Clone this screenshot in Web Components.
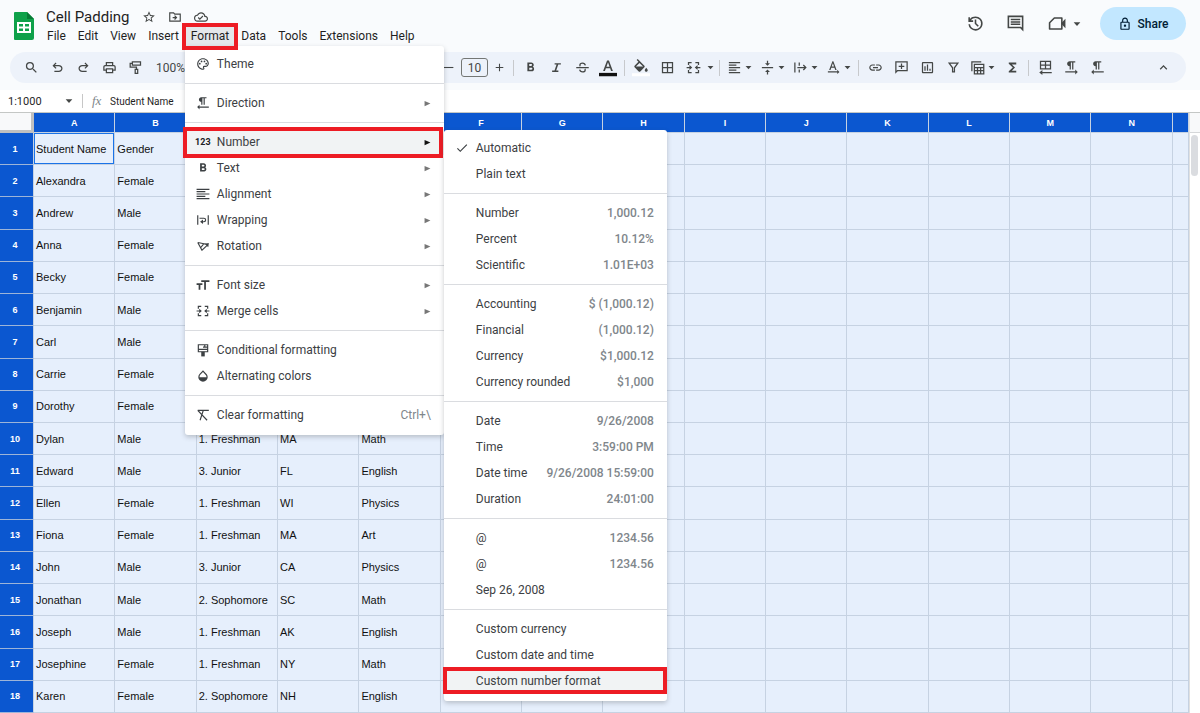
<!DOCTYPE html>
<html lang="en">
<head>
<meta charset="utf-8">
<title>Cell Padding</title>
<style>
html,body{margin:0;height:100%}
body{font-family:Roboto,"Noto Sans",sans-serif;font-size:12px;color:#1f1f1f;background:#fff;overflow:hidden}
</style>
</head>
<body>
<sheets-app>
  <doc-header slot="header"></doc-header>
  <tool-bar slot="header"></tool-bar>
  <formula-bar slot="formula"></formula-bar>
  <sheet-grid slot="grid"></sheet-grid>
</sheets-app>

<script>
const S = 'fill="none" stroke="currentColor" stroke-width="2"';
const p = d => `<path d="${d}"/>`;
const ICONS = {
  search: p('M15.5 14h-.79l-.28-.27A6.471 6.471 0 0 0 16 9.5 6.5 6.5 0 1 0 9.5 16c1.61 0 3.09-.59 4.23-1.57l.27.28v.79l5 4.99L20.49 19l-4.99-5zm-6 0C7.01 14 5 11.99 5 9.5S7.01 5 9.5 5 14 7.01 14 9.5 11.99 14 9.5 14z'),
  undo: p('M7 19v-2h7.1q1.575 0 2.738-1T18 13.5t-1.163-2.5T14.1 10H7.8l2.6 2.6L9 14 4 9l5-5 1.4 1.4L7.8 8h6.3q2.425 0 4.163 1.575T20 13.5t-1.738 3.925T14.1 19z'),
  redo: '<g transform="matrix(-1 0 0 1 24 0)">' + p('M7 19v-2h7.1q1.575 0 2.738-1T18 13.5t-1.163-2.5T14.1 10H7.8l2.6 2.6L9 14 4 9l5-5 1.4 1.4L7.8 8h6.3q2.425 0 4.163 1.575T20 13.5t-1.738 3.925T14.1 19z') + '</g>',
  print: p('M19 8h-1V3H6v5H5c-1.66 0-3 1.34-3 3v6h4v4h12v-4h4v-6c0-1.66-1.34-3-3-3zM8 5h8v3H8V5zm8 14H8v-4h8v4zm2-4v-2H6v2H4v-4c0-.55.45-1 1-1h14c.55 0 1 .45 1 1v4h-2z'),
  paint: `<path ${S} d="M7 3h13v5H7zM7 5.500H3.500V11.500h10V15M11.500 15h4v6.500h-4z"/>`,
  minus: p('M3 11h18v2H3z'),
  plus: p('M19 13h-6v6h-2v-6H5v-2h6V5h2v6h6v2z'),
  bold: p('M15.600 10.790c.97-.67 1.650-1.770 1.650-2.790 0-2.260-1.750-4-4-4H7v14h7.040c2.090 0 3.710-1.700 3.710-3.790 0-1.520-.86-2.820-2.150-3.420zM10 6.500h3c.83 0 1.500.67 1.500 1.500s-.67 1.500-1.500 1.500h-3v-3zm3.500 9H10v-3h3.500c.83 0 1.500.67 1.500 1.500s-.67 1.500-1.500 1.500z'),
  italic: p('M9 5v2.300h3.100l-3.300 9.400H5V19h10v-2.300h-3.500l3.300-9.400H19V5z'),
  strike: `<path ${S} d="M2 12h20M16.500 8.500C16 6 14.500 5 12 5 9.500 5 7.800 6.200 7.800 8.200c0 .8.300 1.300.8 1.800M7.500 15.500C8 18 9.500 19 12 19c2.500 0 4.300-1 4.300-3.200 0-.7-.2-1.200-.5-1.600"/>`,
  color: '<path d="M5.490 16h2.420l1.270-3.580h5.650L16.090 16h2.420L13.250 2h-2.500L5.490 16zm4.420-5.610 2.030-5.790h.12l2.030 5.790H9.910z"/><path fill="#111" d="M0 18.500h24V23H0z"/>',
  fill: p('M16.560 8.940L7.620 0 6.210 1.410l2.380 2.380-5.150 5.150c-.59.59-.59 1.540 0 2.120l5.500 5.500c.29.29.68.44 1.060.44s.77-.15 1.060-.44l5.500-5.500c.59-.58.59-1.530 0-2.120zM5.210 10L10 5.210 14.790 10H5.210zM19 11.500s-2 2.170-2 3.500c0 1.100.9 2 2 2s2-.9 2-2c0-1.330-2-3.500-2-3.500z') + '<path fill="#fff" d="M0 19h24v4H0z"/>',
  borders: p('M3 3v18h18V3H3zm8 16H5v-6h6v6zm0-8H5V5h6v6zm8 8h-6v-6h6v6zm0-8h-6V5h6v6z'),
  merge: `<path ${S} d="M9 4H4v4M4 16v4h5M15 4h5v4M20 16v4h-5M1 12h7M23 12h-7"/><path d="M5.500 8l4.500 4-4.500 4zM18.500 8L14 12l4.500 4z"/>`,
  alignLeft: p('M15 15H3v2h12v-2zm0-8H3v2h12V7zM3 13h18v-2H3v2zm0 8h18v-2H3v2zM3 3v2h18V3H3z'),
  menuAlign: p('M16 15H1v2h15v-2zm0-8H1v2h15V7zM1 13h22v-2H1v2zm0 8h22v-2H1v2zM1 3v2h22V3H1z'),
  valign: p('M8 19h3v4h2v-4h3l-4-4-4 4zm8-14h-3V1h-2v4H8l4 4 4-4zM3 11v2h18v-2H3z'),
  overflow: `<path ${S} d="M3 4v16M10 4v5M10 15v5M7 12h13M16.500 8l4 4-4 4"/>`,
  rotate: p('M11.750 2h-1.500L5 16h2.200l1.300-3.600h5l1.300 3.600H17L11.750 2zm-2.620 8.400L11 5l1.870 5.400H9.130zM21.500 19l-3.500-3.500V18H3v2h15v2.500z'),
  link: p('M3.900 12c0-1.710 1.390-3.100 3.100-3.100h4V7H7c-2.760 0-5 2.240-5 5s2.240 5 5 5h4v-1.900H7c-1.710 0-3.100-1.390-3.100-3.100zM8 13h8v-2H8v2zm9-6h-4v1.900h4c1.710 0 3.100 1.390 3.100 3.100s-1.390 3.100-3.100 3.100h-4V17h4c2.760 0 5-2.240 5-5s-2.240-5-5-5z'),
  addComment: p('M22 2H2v20l4-4h16V2zm-2 14H5.170L4 17.170V4h16v12zM11 14.500h2V11h3.500V9H13V5.500h-2V9H7.500v2H11z'),
  chart: p('M9 17H7v-7h2v7zm4 0h-2V7h2v10zm4 0h-2v-3h2v3zm2 2H5V5h14v14zm0-16H5c-1.100 0-2 .9-2 2v14c0 1.100.9 2 2 2h14c1.100 0 2-.9 2-2V5c0-1.100-.9-2-2-2z'),
  filter: `<path ${S} d="M5 5h14l-5.500 7.500V19h-3v-6.500z"/>`,
  views: `<path ${S} d="M7 7h15v15H7zM7 12h15M7 17h15M12 12v10M17 12v10M3 18V3h15"/>`,
  sigma: p('M18 4H6v2l6.500 6L6 18v2h12v-3h-7l5-5-5-5h7z'),
  tableRtl: `<path ${S} d="M4 2h16v12H4zM4 8h16M12 2v12M22 20H5"/><path d="M7 16v8l-5-4z"/>`,
  ltr: p('M9 10v5h2V4h2v11h2V4h3V2H9C6.790 2 5 3.790 5 6s1.790 4 4 4zm13 9l-4-4v3H2v2h16v3l4-4z'),
  rtl: p('M9 10v5h2V4h2v11h2V4h3V2H9C6.790 2 5 3.790 5 6s1.790 4 4 4zM2 19l4-4v3h16v2H6v3l-4-4z'),
  chevron: p('M12 8l-6 6 1.410 1.410L12 10.830l4.590 4.580L18 14z'),
  caret: p('M2 7h20L12 18z'),
  arrow: p('M2 3v18l20-9z'),
  history: p('M12 21q-3.450 0-6.012-2.287T3.050 13H5.100q.35 2.600 2.313 4.300T12 19q2.925 0 4.963-2.037T19 12t-2.037-4.963T12 5q-1.725 0-3.225.8T6.250 8H9v2H3V4h2v2.350q1.275-1.600 3.113-2.475T12 3q1.875 0 3.513.713t2.850 1.924 1.925 2.850T21 12t-.712 3.513-1.925 2.850-2.850 1.925T12 21m2.800-4.800L11 12.400V7h2v4.600l3.200 3.200z'),
  comment: p('M22 2H2v16h16l4 4V2zM20 4v13.170L18.830 16H4V4h16zM6 12h12v2H6zm0-3h12v2H6zm0-3h12v2H6z'),
  meet: `<path ${S} stroke-linejoin="round" d="M8 5h9.500v14H2V11z"/><path d="M17 11.500L22 6v12l-5-5.500z"/>`,
  lock: p('M18 8h-1V6c0-2.760-2.240-5-5-5S7 3.240 7 6v2H6c-1.100 0-2 .9-2 2v10c0 1.100.9 2 2 2h12c1.100 0 2-.9 2-2V10c0-1.100-.9-2-2-2zM9 6c0-1.660 1.340-3 3-3s3 1.340 3 3v2H9V6zm9 14H6V10h12v10zm-6-3c1.100 0 2-.9 2-2s-.9-2-2-2-2 .9-2 2 .9 2 2 2z'),
  star: p('M22 9.240l-7.190-.62L12 2 9.190 8.630 2 9.240l5.460 4.730L5.820 21 12 17.270 18.180 21l-1.630-7.030L22 9.240zM12 15.400l-3.760 2.270 1-4.280-3.320-2.880 4.380-.38L12 6.100l1.710 4.040 4.380.38-3.320 2.880 1 4.280L12 15.400z'),
  folder: p('M22 6H12l-2-2H2v16h20V6zm-2 12H4V6h5.170l2 2H20v10zm-7.840-6H8v2h4.160l-1.590 1.590L11.990 17 16 13.010 11.990 9l-1.410 1.410L12.160 12z'),
  cloud: p('M19.350 10.040A7.490 7.490 0 0 0 12 4C9.110 4 6.600 5.640 5.350 8.040A5.994 5.994 0 0 0 0 14c0 3.310 2.690 6 6 6h13c2.760 0 5-2.240 5-5 0-2.640-2.050-4.780-4.650-4.960zM19 18H6c-2.210 0-4-1.790-4-4 0-2.050 1.530-3.760 3.560-3.970l1.070-.11.5-.95A5.469 5.469 0 0 1 12 6c2.620 0 4.880 1.860 5.390 4.430l.3 1.500 1.530.11A2.980 2.980 0 0 1 22 15c0 1.650-1.350 3-3 3zm-9-3.820l-2.090-2.090L6.500 13.500 10 17l6.010-6.010-1.410-1.410z'),
  palette: p('M12 22C6.490 22 2 17.510 2 12S6.490 2 12 2s10 4.040 10 9c0 3.310-2.690 6-6 6h-1.770c-.28 0-.5.22-.5.5 0 .12.05.23.13.33.41.47.64 1.060.64 1.670A2.500 2.500 0 0 1 12 22zm0-18c-4.410 0-8 3.590-8 8s3.590 8 8 8c.28 0 .5-.22.5-.5a.54.54 0 0 0-.14-.35c-.41-.46-.63-1.050-.63-1.650a2.500 2.500 0 0 1 2.500-2.500H16c2.210 0 4-1.790 4-4 0-3.860-3.590-7-8-7z') + '<circle cx="6.500" cy="11.500" r="1.500"/><circle cx="9.500" cy="7.500" r="1.500"/><circle cx="14.500" cy="7.500" r="1.500"/><circle cx="17.500" cy="11.500" r="1.500"/>',
  wrap: `<path ${S} d="M3 4v16M21 4v16M6 9h7.500a3 3 0 0 1 0 6H11"/><path d="M12 11v8l-5-4z"/>`,
  rotation: `<path ${S} d="M3 6l15 3M3 6l7 13M13.500 8l-5.500 7M9.500 20L20 10"/><path d="M15 8l7-1-1 7z"/>`,
  fontSize: p('M9 4v3h5v13h3V7h6V4H9zM1 12h3.500v8h3v-8H11V9H1v3z'),
  conditional: `<path ${S} d="M4 3h16v12H4zM4 11h16M12 7h8M15 3v5"/><path d="M9 15h6v8H9z"/>`,
  drop: p('M17.660 8L12 2.350 6.340 8A8.020 8.020 0 0 0 4 13.640c0 2 .78 4.110 2.340 5.670a7.990 7.990 0 0 0 11.320 0c1.560-1.560 2.340-3.670 2.340-5.670S19.220 9.560 17.660 8zM6 14c.01-2 .62-3.270 1.760-4.400L12 5.270l4.240 4.380C17.380 10.770 17.990 12 18 14H6z'),
  clear: `<path ${S} d="M3 4h19M12.500 4L7 21M3 4l16 17"/>`,
  check: p('M9 16.170L4.830 12l-1.420 1.410L9 19 21 7l-1.410-1.410z')
};

class GIcon extends HTMLElement {
  connectedCallback() {
    if (this.shadowRoot) return;
    this.attachShadow({mode: 'open'}).innerHTML = `
      <style>
        :host{display:inline-flex;flex:none;width:var(--icon-size,16px);height:var(--icon-size,16px)}
        svg{width:100%;height:100%;fill:currentColor;display:block}
      </style><svg viewBox="0 0 24 24" aria-hidden="true">${ICONS[this.getAttribute('name')]}</svg>`;
  }
}

class SheetsApp extends HTMLElement {
  constructor() {
    super();
    this.attachShadow({mode: 'open'}).innerHTML = `
      <style>
        :host{display:flex;flex-direction:column;height:100vh}
        header{background:#f9fbfd;padding-bottom:7px}
        main{flex:1;min-height:0;display:flex;flex-direction:column}
      </style>
      <header><slot name="header"></slot></header>
      <slot name="formula"></slot>
      <main><slot name="grid"></slot></main>`;
  }
}

class DocHeader extends HTMLElement {
  constructor() {
    super();
    this.attachShadow({mode: 'open'}).innerHTML = `
      <style>
        :host{display:flex;align-items:flex-start;padding:6px 14px 6px 13px;color:#1f1f1f}
        .logo{width:22px;height:30px;margin-top:5px;flex:none}
        .doc{margin-left:7px}
        .title{display:flex;align-items:center;gap:12px;height:21px;padding-left:4px;--icon-size:14px;color:#444746}
        h1{margin:0;font-size:15px;line-height:20px;font-weight:400;color:#1f1f1f}
        .right{margin-left:auto;display:flex;align-items:center;margin-top:1px;color:#444746}
        button{border:0;background:none;padding:0;font:inherit;color:inherit;display:flex;align-items:center}
        .tool{width:40px;height:33px;justify-content:center;--icon-size:19px}
        .meet{width:48px;gap:6px;padding-left:10px;box-sizing:border-box}
        .meet .c{--icon-size:8px}
        .share{background:#c2e7ff;color:#001d35;border-radius:17px;height:33px;width:86px;justify-content:center;gap:6px;font-weight:500;font-size:12px;margin-left:17px;--icon-size:14px}
      </style>
      <svg class="logo" viewBox="0 0 22 30" role="img" aria-label="Sheets"><path fill="#0fa14a" d="M2 1h12l7 7v19a2 2 0 0 1-2 2H2a1 1 0 0 1-1-1V2a1 1 0 0 1 1-1z"/><path fill="#087a36" d="M14 1l7 7h-7z"/><path fill="none" stroke="#fff" stroke-width="2" d="M5 12h12v9H5zM5 16.500h12M11 12v9"/></svg>
      <div class="doc">
        <div class="title"><h1>Cell Padding</h1>
          <button aria-label="Star"><g-icon name="star"></g-icon></button>
          <button aria-label="Move"><g-icon name="folder"></g-icon></button>
          <button aria-label="Saved to Drive"><g-icon name="cloud"></g-icon></button>
        </div>
        <menu-bar></menu-bar>
      </div>
      <div class="right">
        <button class="tool" aria-label="History"><g-icon name="history"></g-icon></button>
        <button class="tool" aria-label="Comments"><g-icon name="comment"></g-icon></button>
        <button class="tool meet" aria-label="Meet"><g-icon name="meet"></g-icon><g-icon class="c" name="caret"></g-icon></button>
        <button class="share"><g-icon name="lock"></g-icon>Share</button>
      </div>`;
  }
}

const item = (label, icon, extra = '', sub = '') => `<menu-item label="${label}" ${icon ? `icon="${icon}"` : ''} ${extra}>${sub}</menu-item>`;
const value = (label, v) => item(label, '', `value="${v}"`);
const line = '<menu-line></menu-line>';
const NUMBER_MENU = `<menu-panel slot="submenu">
  ${item('Automatic', 'check')}${item('Plain text', '')}${line}
  ${value('Number', '1,000.12')}${value('Percent', '10.12%')}${value('Scientific', '1.01E+03')}${line}
  ${value('Accounting', '$ (1,000.12)')}${value('Financial', '(1,000.12)')}${value('Currency', '$1,000.12')}${value('Currency rounded', '$1,000')}${line}
  ${value('Date', '9/26/2008')}${value('Time', '3:59:00 PM')}${value('Date time', '9/26/2008 15:59:00')}${value('Duration', '24:01:00')}${line}
  ${value('@', '1234.56')}${value('@', '1234.56')}${item('Sep 26, 2008', '')}${line}
  ${item('Custom currency', '')}${item('Custom date and time', '')}${item('Custom number format', '', 'active marked="inside"')}
</menu-panel>`;
const FORMAT_MENU = `<menu-panel class="dropdown">
  ${item('Theme', 'palette')}${line}
  ${item('Direction', 'rtl', 'arrow')}${line}
  ${item('Number', '123', 'arrow active marked', NUMBER_MENU)}
  ${item('Text', 'bold', 'arrow')}${item('Alignment', 'menuAlign', 'arrow')}${item('Wrapping', 'wrap', 'arrow')}${item('Rotation', 'rotation', 'arrow')}${line}
  ${item('Font size', 'fontSize', 'arrow')}${item('Merge cells', 'merge', 'arrow')}${line}
  ${item('Conditional formatting', 'conditional')}${item('Alternating colors', 'drop')}${line}
  ${item('Clear formatting', 'clear', 'value="Ctrl+\\" shortcut')}
</menu-panel>`;

class MenuBar extends HTMLElement {
  constructor() {
    super();
    const names = ['File', 'Edit', 'View', 'Insert', 'Format', 'Data', 'Tools', 'Extensions', 'Help'];
    this.attachShadow({mode: 'open'}).innerHTML = `
      <style>
        :host{display:flex;gap:2px}
        .entry{position:relative}
        button{border:0;background:none;font:inherit;font-size:12px;line-height:19px;height:19px;padding:0 5px;color:#1f1f1f;display:block}
        .open button{background:#e4e7ea}
        .open::after{content:"";position:absolute;inset:-4px;border:4px solid #ed1c24;z-index:12;pointer-events:none}
        .dropdown{position:absolute;z-index:10;top:100%;left:-1px;width:259px}
      </style>
      ${names.map(n => `<div class="entry${n === 'Format' ? ' open' : ''}"><button>${n}</button>${n === 'Format' ? FORMAT_MENU : ''}</div>`).join('')}`;
  }
}

class MenuPanel extends HTMLElement {
  constructor() {
    super();
    this.attachShadow({mode: 'open'}).innerHTML = `
      <style>:host{display:block;box-sizing:border-box;background:#fff;border-radius:3px;padding:5px 0 7px;box-shadow:0 2px 5px rgba(60,64,67,.28)}</style>
      <slot></slot>`;
  }
  connectedCallback() { this.setAttribute('role', 'menu'); }
}

class MenuLine extends HTMLElement {
  constructor() {
    super();
    this.attachShadow({mode: 'open'}).innerHTML = `<style>:host{display:block;height:1px;background:#dadce0;margin:6px 0}</style>`;
  }
}

class MenuItem extends HTMLElement {
  connectedCallback() {
    if (this.shadowRoot) return;
    const a = n => this.getAttribute(n);
    const icon = a('icon') === '123' ? '<b>123</b>' : a('icon') ? `<g-icon name="${a('icon')}"></g-icon>` : '';
    this.attachShadow({mode: 'open'}).innerHTML = `
      <style>
        :host{display:block;position:relative}
        button{width:100%;height:26px;border:0;background:none;font:inherit;font-size:12px;line-height:16px;color:#3c4043;display:flex;align-items:center;padding:0 13px 0 0;text-align:left}
        :host([active]) button{background:#f1f3f4}
        .icon{width:32px;flex:none;display:flex;justify-content:center;box-sizing:border-box;padding-left:4px;--icon-size:14px}
        b{font-size:9px;color:#202124}
        .label{flex:1;white-space:nowrap}
        .value{color:#80868b;font-weight:500;white-space:nowrap}
        :host([shortcut]) .value{font-weight:400}
        .arrow{--icon-size:7px;color:#777}
        :host([active]) .arrow{color:#111}
        :host([marked])::after{content:"";position:absolute;inset:-2px 1px -3px -2px;border:4px solid #ed1c24;pointer-events:none}
        :host([marked=inside])::after{inset:-1px 0 0 -1px}
        ::slotted(menu-panel){position:absolute;top:1px;left:100%;width:223px;z-index:1}
      </style>
      <button role="menuitem"><span class="icon">${icon}</span><span class="label">${a('label')}</span>${a('value') ? `<span class="value">${a('value')}</span>` : ''}${this.hasAttribute('arrow') ? '<g-icon class="arrow" name="arrow"></g-icon>' : ''}</button>
      <slot name="submenu"></slot>`;
  }
}

class ToolBar extends HTMLElement {
  constructor() {
    super();
    const b = (n, l) => `<button aria-label="${l}"><g-icon name="${n}"></g-icon></button>`;
    const d = (n, l, c = '') => `<button class="drop ${c}" aria-label="${l}"><span><g-icon name="${n}"></g-icon></span><g-icon class="caret" name="caret"></g-icon></button>`;
    this.attachShadow({mode: 'open'}).innerHTML = `
      <style>
        :host{display:flex;align-items:center;height:31px;margin:0 14px 0 10px;padding:0 10px 0 8px;box-sizing:border-box;border-radius:16px;background:#edf2fa;color:#444746;--icon-size:15px}
        button{flex:none;border:0;background:none;padding:0;width:26px;height:26px;color:inherit;display:flex;align-items:center;justify-content:center}
        .drop{width:33px;justify-content:flex-start}
        .drop span{width:22px;display:flex;justify-content:center}
        .wide{width:36px}.wide span{width:27px}
        .caret{--icon-size:7px}
        .big{--icon-size:18px}
        i{flex:none;width:1px;height:16px;background:#c7c9cc;margin:0 3px}
        select,input{font:inherit;font-size:12px;color:#444746;box-sizing:border-box;margin:0}
        .zoom{flex:none;width:287px}
        select{appearance:none;border:0;background:none;width:60px;padding:0 0 0 8px}
        input{width:27px;height:19px;border:1px solid #747775;border-radius:3px;background:none;padding:0;text-align:center}
        .step{width:22px;--icon-size:13px}
        .first{width:26px}
        .up{margin-left:auto}
      </style>
      ${b('search', 'Search')}${b('undo', 'Undo')}${b('redo', 'Redo')}${b('print', 'Print')}${b('paint', 'Paint format')}
      <div class="zoom"><select aria-label="Zoom"><option>100%</option></select></div>
      <button class="step first" aria-label="Decrease font size"><g-icon name="minus"></g-icon></button>
      <input aria-label="Font size" value="10">
      <button class="step" aria-label="Increase font size"><g-icon name="plus"></g-icon></button>
      <i></i>${b('bold', 'Bold')}${b('italic', 'Italic')}${b('strike', 'Strikethrough')}<button class="big" aria-label="Text color"><g-icon name="color"></g-icon></button>
      <i></i><button class="big" aria-label="Fill color"><g-icon name="fill"></g-icon></button>${b('borders', 'Borders')}${d('merge', 'Merge cells', 'wide')}
      <i></i>${d('alignLeft', 'Horizontal align')}${d('valign', 'Vertical align')}${d('overflow', 'Text wrapping')}${d('rotate', 'Text rotation')}
      <i></i>${b('link', 'Insert link')}${b('addComment', 'Insert comment')}${b('chart', 'Insert chart')}${b('filter', 'Create a filter')}${d('views', 'Filter views')}${b('sigma', 'Functions')}
      <i></i>${b('tableRtl', 'Sheet direction')}${b('ltr', 'Left to right')}${b('rtl', 'Right to left')}
      <button class="up" aria-label="Hide the menus"><g-icon name="chevron"></g-icon></button>`;
  }
}

class FormulaBar extends HTMLElement {
  constructor() {
    super();
    this.attachShadow({mode: 'open'}).innerHTML = `
      <style>
        :host{display:flex;align-items:center;height:22px;background:#fff}
        input{border:0;outline:0;background:none;font:inherit;color:#1f1f1f;padding:0;margin:0;min-width:0}
        .name{width:57px;padding-left:8px;font-size:11px}
        .caret{--icon-size:8px;color:#444746}
        i{width:1px;height:14px;background:#c7c7c7;margin:0 9px}
        em{font-family:"Liberation Serif",serif;font-size:13px;line-height:14px;color:#80868b;width:18px}
        .value{flex:1;font-size:10px}
      </style>
      <input class="name" aria-label="Name box" value="1:1000"><g-icon class="caret" name="caret"></g-icon><i></i>
      <em>fx</em><input class="value" aria-label="Formula" value="Student Name">`;
  }
}

const ROWS = [
  ['Student Name', 'Gender'], ['Alexandra', 'Female'], ['Andrew', 'Male'], ['Anna', 'Female'], ['Becky', 'Female'],
  ['Benjamin', 'Male'], ['Carl', 'Male'], ['Carrie', 'Female'], ['Dorothy', 'Female'],
  ['Dylan', 'Male', '1. Freshman', 'MA', 'Math'],
  ['Edward', 'Male', '3. Junior', 'FL', 'English'],
  ['Ellen', 'Female', '1. Freshman', 'WI', 'Physics'],
  ['Fiona', 'Female', '1. Freshman', 'MA', 'Art'],
  ['John', 'Male', '3. Junior', 'CA', 'Physics'],
  ['Jonathan', 'Male', '2. Sophomore', 'SC', 'Math'],
  ['Joseph', 'Male', '1. Freshman', 'AK', 'English'],
  ['Josephine', 'Female', '1. Freshman', 'NY', 'Math'],
  ['Karen', 'Female', '2. Sophomore', 'NH', 'English']
];

class SheetGrid extends HTMLElement {
  constructor() {
    super();
    const cols = [...'ABCDEFGHIJKLMN', ''];
    this.attachShadow({mode: 'open'}).innerHTML = `
      <style>
        :host{display:flex;flex:1;min-height:0;border-top:1px solid #c4c7c5;font-family:"Liberation Sans",Arial,sans-serif}
        .sheet{flex:1;min-width:0}
        table{width:100%;height:100%;table-layout:fixed;border-collapse:separate;border-spacing:0}
        th,td{box-sizing:border-box;padding:0;border-right:1px solid #c6d2e2;border-bottom:1px solid #c6d2e2;overflow:hidden;white-space:nowrap}
        th{background:#0b57d0;color:#fff;font-size:9px;line-height:12px;font-weight:700;text-align:center}
        tbody th{border-bottom-color:#9db4d8;padding-right:3px}
        thead th{height:20px}
        td{background:#e6effc;color:#111;font-size:11px;line-height:14px;padding-left:2px}
        tbody tr:first-child td:nth-child(2){box-shadow:inset 0 0 0 1px #1a73e8}
        .head{width:34px}.tail{width:16px}
        thead .corner{background:#f8f9fa;border-right:3px solid #c0c0c0;border-bottom:3px solid #c0c0c0}
        .scroll{width:11px;box-sizing:border-box;border-left:1px solid #e0e0e0;background:#fff;padding:0 1px}
        .cap{height:19px;border-bottom:1px solid #d5d7d9;background:#f8f9fa;margin:0 -1px}
        .thumb{height:41px;border-radius:4px;background:#dadce0;width:7px;margin-top:2px}
      </style>
      <div class="sheet"><table>
        <colgroup><col class="head">${cols.map(c => `<col${c ? '' : ' class="tail"'}>`).join('')}</colgroup>
        <thead><tr><th class="corner"></th>${cols.map(c => `<th scope="col">${c}</th>`).join('')}</tr></thead>
        <tbody>${ROWS.map((r, i) => `<tr><th scope="row">${i + 1}</th>${cols.map((c, j) => `<td>${r[j] || ''}</td>`).join('')}</tr>`).join('')}</tbody>
      </table></div>
      <div class="scroll"><div class="cap"></div><div class="thumb"></div></div>`;
  }
}

customElements.define('g-icon', GIcon);
customElements.define('menu-line', MenuLine);
customElements.define('menu-item', MenuItem);
customElements.define('menu-panel', MenuPanel);
customElements.define('menu-bar', MenuBar);
customElements.define('doc-header', DocHeader);
customElements.define('tool-bar', ToolBar);
customElements.define('formula-bar', FormulaBar);
customElements.define('sheet-grid', SheetGrid);
customElements.define('sheets-app', SheetsApp);
</script>
</body>
</html>
